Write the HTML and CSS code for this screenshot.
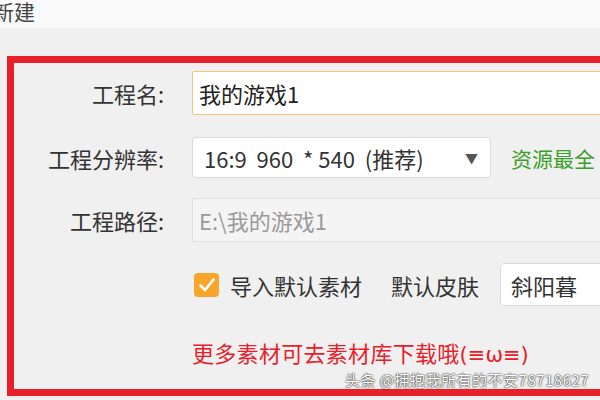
FILE: index.html
```html
<!DOCTYPE html>
<html lang="zh-CN">
<head>
    <meta charset="UTF-8">
    <title>新建</title>
    <link rel="stylesheet" href="styles.css">
</head>
<body>
    <div class="title-bar">新建</div>

    <div class="project-panel">
        <div class="form-row row-name">
            <label class="form-label">工程名:</label>
            <input type="text" class="form-input active" value="我的游戏1">
        </div>

        <div class="form-row row-res">
            <label class="form-label">工程分辨率:</label>
            <div class="select res-select">
                <span class="res-text">16:9&nbsp;&nbsp;960&nbsp;&nbsp;*&nbsp;540&nbsp;&nbsp;(推荐)</span>
                <span class="arrow">&#9660;</span>
            </div>
            <span class="hint-green">资源最全</span>
        </div>

        <div class="form-row row-path">
            <label class="form-label">工程路径:</label>
            <input type="text" class="form-input" value="E:\我的游戏1" disabled>
        </div>

        <div class="form-row row-opts">
            <span class="form-label"></span>
            <div class="opts">
                <span class="checkbox">
                    <svg width="18" height="16" viewBox="0 0 18 16">
                        <path d="M2.5 8.5 L7 13 L15.5 2.5" fill="none" stroke="#fff" stroke-width="2.6" stroke-linecap="round" stroke-linejoin="round"/>
                    </svg>
                </span>
                <span class="opt-text">导入默认素材</span>
                <span class="opt-text skin-label">默认皮肤</span>
                <div class="select skin-select">斜阳暮</div>
            </div>
        </div>

        <div class="form-row row-tip">
            <span class="form-label"></span>
            <span class="tip-red">更多素材可去素材库下载哦<span class="kao">(≡ω≡)</span></span>
        </div>
    </div>

    <div class="watermark">头条 @拥抱我所有的不安78718627</div>
</body>
</html>
```

FILE: styles.css
```css
body {
    margin: 0;
    width: 600px;
    height: 400px;
    overflow: hidden;
    background-color: #f0f0f0;
    font-family: "Noto Sans CJK SC", "Noto Sans", sans-serif;
    color: #333;
    position: relative;
}

.title-bar {
    height: 28px;
    background-color: #fafafa;
    font-size: 21px;
    line-height: 22px;
    margin-left: -7px;
    color: #444;
}

.project-panel {
    margin: 28px 0 0 7px;
    width: 680px;
    height: 318px;
    border: 7px solid #e8202a;
    padding-top: 8px;
}

.form-row {
    display: flex;
    align-items: center;
}

.form-label {
    width: 150px;
    flex: none;
    text-align: right;
    font-size: 22px;
    margin-right: 28px;
    color: #333;
}

.row-name { height: 44px; }
.row-res { height: 41px; margin-top: 22px; }
.row-path { height: 44px; margin-top: 20px; }
.row-opts { height: 43px; margin-top: 21px; }
.row-tip { height: 30px; margin-top: 31px; }

.form-input {
    flex: 1;
    height: 100%;
    box-sizing: border-box;
    border: 1px solid #dcdcdc;
    border-radius: 2px;
    background-color: #fff;
    padding: 0 6px;
    font-family: inherit;
    font-size: 22px;
    color: #222;
    outline: none;
}

.form-input.active {
    border-color: #f6c37a;
}

.form-input:disabled {
    background-color: #f4f4f4;
    border-color: #e2e2e2;
    color: #9a9a9a;
}

.select {
    height: 100%;
    box-sizing: border-box;
    border: 1px solid #dadada;
    border-radius: 4px;
    background-color: #fff;
    display: flex;
    align-items: center;
    font-size: 21px;
    color: #333;
}

.res-select {
    width: 299px;
    padding: 0 12px 0 11px;
    justify-content: space-between;
}

.res-text {
    font-size: 22px;
}

.arrow {
    font-size: 13px;
    color: #555;
}

.hint-green {
    margin-left: 20px;
    font-size: 21px;
    color: #3aa02a;
    white-space: nowrap;
}

.opts {
    display: flex;
    align-items: center;
    height: 100%;
    flex: 1;
}

.checkbox {
    width: 25px;
    height: 24px;
    margin-left: 2px;
    border-radius: 4px;
    background-color: #f9a52c;
    display: flex;
    align-items: center;
    justify-content: center;
}

.opt-text {
    font-size: 22px;
    margin-left: 11px;
}

.skin-label {
    margin-left: 29px;
    margin-right: 21px;
}

.skin-select {
    flex: 1;
    padding-left: 10px;
    font-size: 22px;
}

.tip-red {
    font-size: 22px;
    letter-spacing: 0.3px;
    color: #e8202a;
}

.kao {
    font-family: "DejaVu Sans", sans-serif;
    font-size: 21px;
    letter-spacing: 0;
}

.watermark {
    position: absolute;
    left: 345px;
    top: 369px;
    font-size: 15px;
    color: #fff;
    text-shadow: 0 0 2px #222, 0 0 1px #222;
    letter-spacing: 0.5px;
}
```
